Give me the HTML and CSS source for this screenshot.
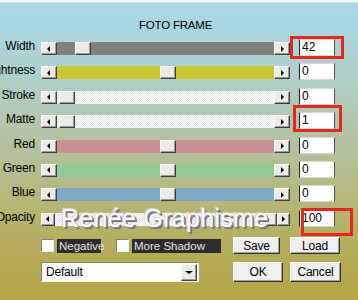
FILE: index.html
```html
<!DOCTYPE html>
<html>
<head>
<meta charset="utf-8">
<link rel="stylesheet" href="styles.css">
</head>
<body>
<div class="dlg">
  <div class="topline"></div>
  <div class="title">FOTO FRAME</div>
  <div class="rows">
    <div class="row">
      <div class="lbl">Width</div>
      <div class="sb"><span class="btn"><span class="tri-l"></span></span><span class="track t-gray"><span class="thumb" style="margin-left:18px"></span></span><span class="btn"><span class="tri-r"></span></span></div>
      <div class="tb">42</div>
    </div>
    <div class="row">
      <div class="lbl">Brightness</div>
      <div class="sb"><span class="btn"><span class="tri-l"></span></span><span class="track t-yellow"><span class="thumb" style="margin-left:103px"></span></span><span class="btn"><span class="tri-r"></span></span></div>
      <div class="tb">0</div>
    </div>
    <div class="row">
      <div class="lbl">Stroke</div>
      <div class="sb"><span class="btn"><span class="tri-l"></span></span><span class="track t-dots"><span class="thumb" style="margin-left:2px"></span></span><span class="btn"><span class="tri-r"></span></span></div>
      <div class="tb">0</div>
    </div>
    <div class="row">
      <div class="lbl">Matte</div>
      <div class="sb"><span class="btn"><span class="tri-l"></span></span><span class="track t-dots"><span class="thumb" style="margin-left:2px"></span></span><span class="btn"><span class="tri-r"></span></span></div>
      <div class="tb">1</div>
    </div>
    <div class="row">
      <div class="lbl">Red</div>
      <div class="sb"><span class="btn"><span class="tri-l"></span></span><span class="track t-red"><span class="thumb" style="margin-left:103px"></span></span><span class="btn"><span class="tri-r"></span></span></div>
      <div class="tb">0</div>
    </div>
    <div class="row">
      <div class="lbl">Green</div>
      <div class="sb"><span class="btn"><span class="tri-l"></span></span><span class="track t-green"><span class="thumb" style="margin-left:103px"></span></span><span class="btn"><span class="tri-r"></span></span></div>
      <div class="tb">0</div>
    </div>
    <div class="row">
      <div class="lbl">Blue</div>
      <div class="sb"><span class="btn"><span class="tri-l"></span></span><span class="track t-blue"><span class="thumb" style="margin-left:103px"></span></span><span class="btn"><span class="tri-r"></span></span></div>
      <div class="tb">0</div>
    </div>
    <div class="row">
      <div class="lbl">Opacity</div>
      <div class="sb"><span class="btn"><span class="tri-l"></span></span><span class="track t-dots"><span class="thumb" style="margin-left:206px"></span></span><span class="btn"><span class="tri-r"></span></span></div>
      <div class="tb">100</div>
    </div>
  </div>

  <div class="bottom">
    <div class="brow">
      <span class="chk"></span><span class="clbl neg">Negative</span>
      <span class="chk chk2"></span><span class="clbl more">More Shadow</span>
      <span class="pbtn save">Save</span>
      <span class="pbtn load">Load</span>
    </div>
    <div class="brow brow2">
      <div class="combo"><span class="ctext">Default</span><span class="cbtn"><span class="tri-d"></span></span></div>
      <span class="pbtn ok">OK</span>
      <span class="pbtn cancel">Cancel</span>
    </div>
  </div>

  <div class="watermark">Renée Graphisme</div>
  <div class="mark m1"></div>
  <div class="mark m2"></div>
  <div class="mark m3"></div>
</div>
</body>
</html>
```
FILE: styles.css
```css
html, body {
  margin: 0;
  padding: 0;
}
body {
  width: 358px;
  height: 300px;
  overflow: hidden;
  font-family: "Liberation Sans", Arial, sans-serif;
  font-size: 12px;
  color: #000;
}
.dlg {
  position: relative;
  width: 358px;
  height: 300px;
  overflow: hidden;
  background: linear-gradient(to bottom, #a9d8e6 0px, #abd5dc 40px, #b1cabc 100px, #b4c19c 150px, #b5b77a 200px, #b4ad5a 250px, #b2a744 300px);
}
.topline {
  height: 2px;
  background: #f4f8f8;
  border-bottom: 1px solid #c4e4ee;
}
.title {
  margin-top: 16px;
  margin-left: 139px;
  font-size: 11.5px;
  line-height: 13px;
  height: 13px;
  letter-spacing: -0.2px;
}
.rows {
  margin-top: 7px;
  display: grid;
  grid-auto-rows: 24.4px;
}
.row {
  display: grid;
  grid-template-columns: 36px 254px 36px;
  column-gap: 0;
  align-items: start;
}
.lbl {
  justify-self: end;
  white-space: nowrap;
  text-align: right;
  font-size: 12px;
  line-height: 13px;
  margin-top: 1px;
  margin-right: 1px;
  letter-spacing: -0.2px;
}
.sb {
  margin-left: 5px;
  margin-top: 3px;
  display: flex;
  height: 13px;
}
.btn {
  box-sizing: border-box;
  width: 16px;
  height: 13px;
  background: #ecebe6;
  border: 1px solid;
  border-color: #ffffff #404040 #404040 #ffffff;
  box-shadow: inset -1px -1px 0 #9a9a9a;
  display: flex;
  align-items: center;
  justify-content: center;
}
.tri-l {
  width: 0;
  height: 0;
  border-top: 3px solid transparent;
  border-bottom: 3px solid transparent;
  border-right: 3px solid #000;
  margin-left: -1px;
}
.tri-r {
  width: 0;
  height: 0;
  border-top: 3px solid transparent;
  border-bottom: 3px solid transparent;
  border-left: 3px solid #000;
  margin-left: 0;
}
.track {
  width: 222px;
  height: 13px;
  display: flex;
}
.thumb {
  box-sizing: border-box;
  width: 16px;
  height: 13px;
  background: #ecebe6;
  border: 1px solid;
  border-color: #ffffff #404040 #404040 #ffffff;
  box-shadow: inset -1px -1px 0 #9a9a9a;
}
.t-gray { background: #808080; }
.t-yellow { background: #c9c832; }
.t-red { background: #c89294; }
.t-green { background: #92c894; }
.t-blue { background: #7fa8c8; }
.t-dots {
  background-color: #f7f7f7;
  background-image: repeating-conic-gradient(#ffffff 0 25%, #e4e4e4 0 50%);
  background-size: 2px 2px;
}
.tb {
  box-sizing: border-box;
  margin-left: 9px;
  width: 36px;
  height: 17px;
  background: #fff;
  border: 1px solid;
  border-color: #d8d8d8 #505050 #d8d8d8 #202020;
  padding-left: 2px;
  font-size: 12px;
  line-height: 14px;
}
.bottom {
  margin-top: 3px;
  padding-left: 41px;
}
.brow {
  display: flex;
  align-items: center;
  height: 17px;
}
.brow2 {
  margin-top: 8px;
  height: 20px;
}
.chk {
  box-sizing: border-box;
  width: 13px;
  height: 13px;
  background: #fff;
  border: 1px solid;
  border-color: #808080 #f0f0f0 #f0f0f0 #808080;
}
.chk2 {
  margin-left: 15px;
}
.clbl {
  box-sizing: border-box;
  margin-left: 3px;
  height: 14px;
  background: #2c2c2c;
  color: #e4e4e4;
  font-size: 11.5px;
  line-height: 14px;
  padding-left: 2px;
  white-space: nowrap;
}
.neg { width: 44px; }
.more { width: 89px; }
.pbtn {
  box-sizing: border-box;
  display: flex;
  align-items: center;
  justify-content: center;
  background: #efefef;
  border: 1px solid;
  border-color: #ffffff #303030 #303030 #ffffff;
  box-shadow: inset -1px -1px 0 #a0a0a0;
  font-size: 12px;
  letter-spacing: -0.2px;
}
.save { margin-left: 12px; width: 47px; height: 17px; }
.load { margin-left: 10px; width: 50px; height: 17px; }
.ok { margin-left: 34px; width: 50px; height: 20px; }
.cancel { margin-left: 7px; width: 51px; height: 20px; }
.combo {
  box-sizing: border-box;
  width: 158px;
  height: 20px;
  background: #fff;
  border: 1px solid;
  border-color: #808080 #f4f4f4 #f4f4f4 #808080;
  display: flex;
  align-items: center;
  justify-content: space-between;
}
.ctext {
  padding-left: 4px;
  font-size: 12px;
  letter-spacing: -0.2px;
}
.cbtn {
  box-sizing: border-box;
  width: 16px;
  height: 17px;
  margin-right: 1px;
  background: #ecebe6;
  border: 1px solid;
  border-color: #ffffff #404040 #404040 #ffffff;
  box-shadow: inset -1px -1px 0 #9a9a9a;
  display: flex;
  align-items: center;
  justify-content: center;
}
.tri-d {
  width: 0;
  height: 0;
  border-left: 4px solid transparent;
  border-right: 4px solid transparent;
  border-top: 3px solid #000;
}
.watermark {
  position: absolute;
  left: 61px;
  top: 206px;
  font-size: 25px;
  line-height: 25px;
  letter-spacing: 0.3px;
  color: #fafafa;
  white-space: nowrap;
  text-shadow: -1px -1px 0 #d4d4d4, 1px 1px 0 #8c8c8c, 2px 2px 0 #707070;
}
.mark {
  position: absolute;
  box-sizing: border-box;
  border: 3px solid #e8261e;
}
.m1 { left: 290px; top: 36px; width: 54px; height: 23px; }
.m2 { left: 293px; top: 105px; width: 49px; height: 27px; }
.m3 { left: 301px; top: 208px; width: 52px; height: 28px; }
```
